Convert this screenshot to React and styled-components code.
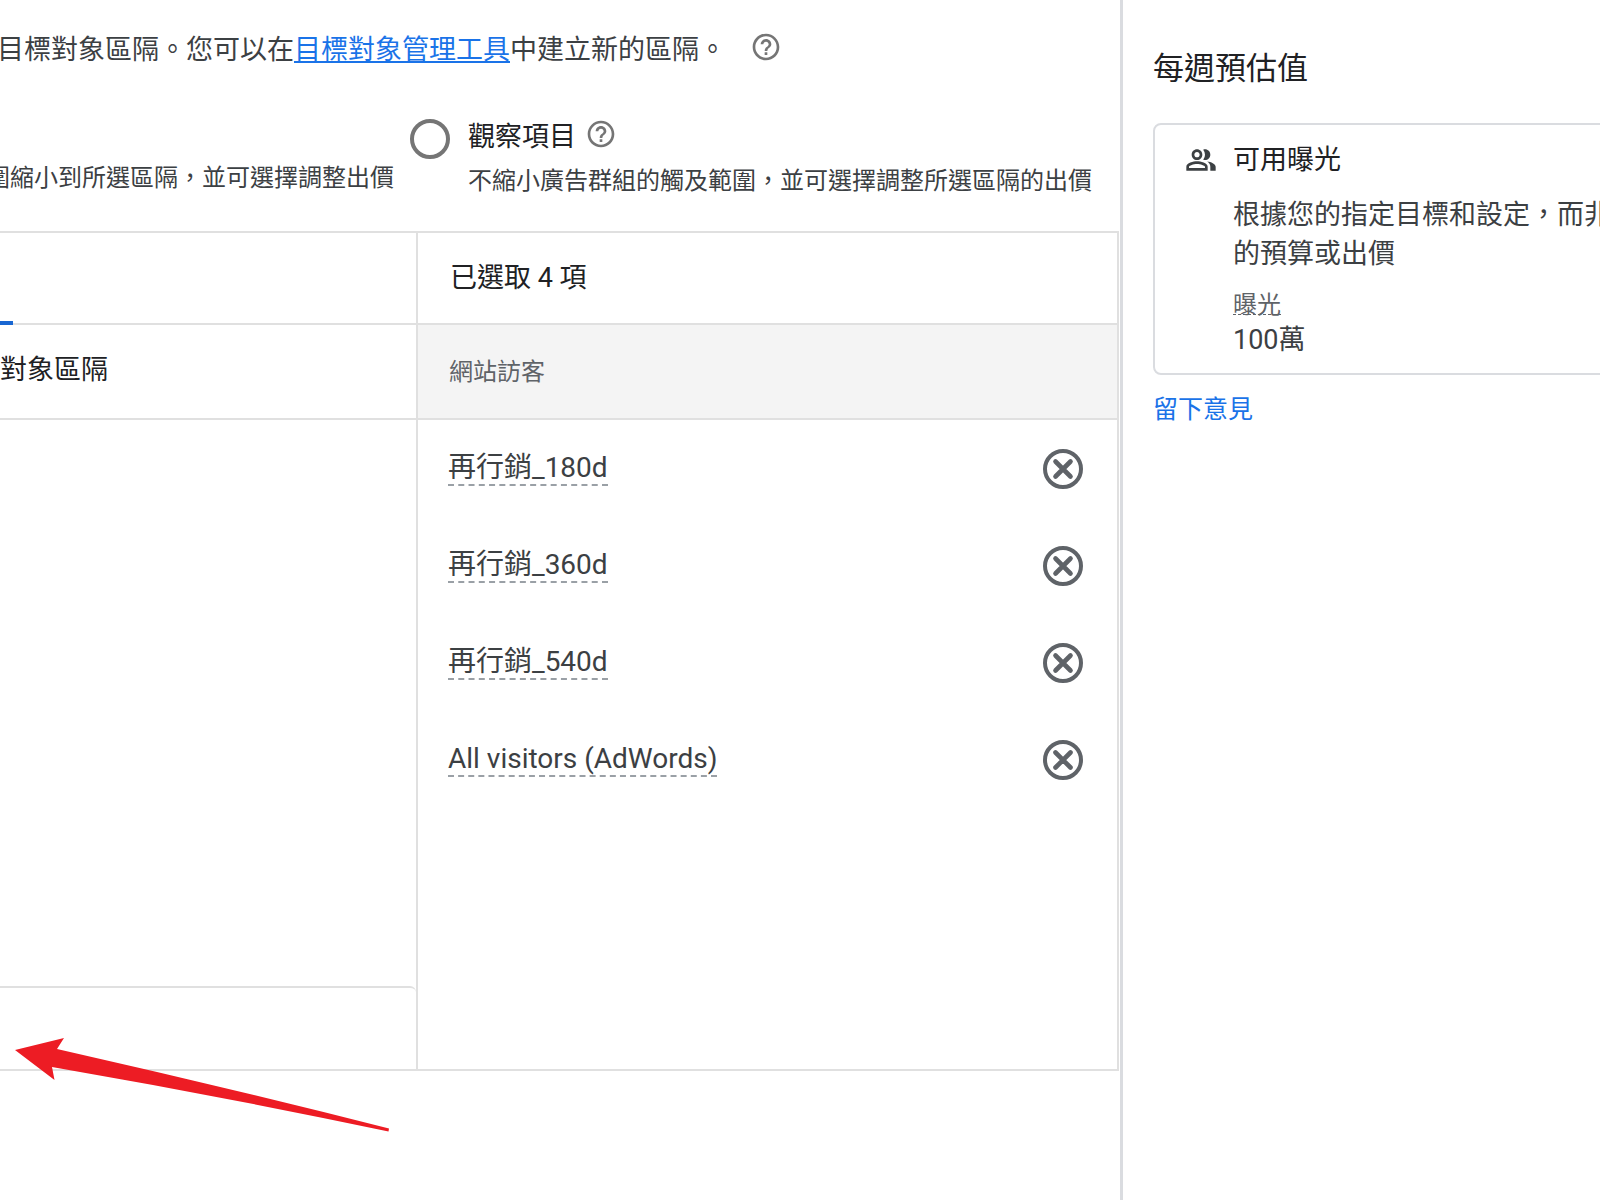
import React, { useState } from "react";
import styled, { createGlobalStyle } from "styled-components";
import { MdHelpOutline, MdOutlinePeopleAlt } from "react-icons/md";

const GlobalStyle = createGlobalStyle`
  * {
    box-sizing: border-box;
  }

  body {
    margin: 0;
    background: #fff;
    color: #3c4043;
    font-family: Roboto, "Noto Sans CJK TC", sans-serif;
    font-size: 27px;
    line-height: 38px;
    overflow: hidden;
  }
`;

const Page = styled.div`
  position: relative;
  display: grid;
  grid-template-columns: minmax(0, 1fr) 480px;
  min-height: 100vh;
  overflow: hidden;
`;

const Main = styled.main`
  min-width: 0;
`;

const Intro = styled.p`
  display: flex;
  align-items: flex-start;
  gap: 24px;
  height: 96px;
  margin: 0 0 0 -3px;
  padding-top: 31px;
  white-space: nowrap;
`;

const InlineLink = styled.a`
  color: #1a73e8;
  text-decoration: underline;
  text-decoration-thickness: 2px;
  text-underline-offset: 2px;
`;

const HelpButton = styled.button`
  display: flex;
  padding: 0;
  border: none;
  background: none;
  color: #757575;
  font-size: 32px;
`;

const Options = styled.div`
  display: grid;
  grid-template-columns: 394px minmax(0, 1fr);
  gap: 16px;
  height: 135px;
  padding-top: 20px;
`;

const ClippedHint = styled.div`
  display: flex;
  justify-content: flex-end;
  padding-top: 43px;
  overflow: hidden;
  font-size: 24px;
  white-space: nowrap;
`;

const Option = styled.div`
  display: grid;
  grid-template-columns: 40px minmax(0, 1fr);
  column-gap: 18px;
  align-content: start;
`;

const Radio = styled.input`
  appearance: none;
  width: 40px;
  height: 40px;
  margin: 3px 0 0;
  border: 4px solid #757575;
  border-radius: 50%;

  &:checked {
    border-color: #1a73e8;
    box-shadow: inset 0 0 0 6px #fff;
    background: #1a73e8;
  }
`;

const OptionTitle = styled.div`
  display: flex;
  align-items: flex-start;
  gap: 9px;
  height: 43px;
  padding-top: 2px;
  color: #202124;
`;

const OptionHint = styled.div`
  grid-column: 2;
  font-size: 24px;
  line-height: 44px;
  white-space: nowrap;
`;

const Picker = styled.section`
  display: grid;
  grid-template-columns: 418px minmax(0, 1fr);
  margin-right: 1px;
  border: 2px solid #e0e0e0;
  border-left: none;
`;

const Source = styled.div`
  display: flex;
  flex-direction: column;
  border-right: 2px solid #e0e0e0;
`;

const TabBar = styled.div`
  display: flex;
  align-items: flex-end;
  height: 92px;
  border-bottom: 2px solid #e0e0e0;
`;

const ActiveTab = styled.div`
  width: 13px;
  height: 4px;
  margin-bottom: -2px;
  background: #1967d2;
`;

const SourceTitle = styled.div`
  display: flex;
  align-items: center;
  height: 95px;
  padding-bottom: 3px;
  border-bottom: 2px solid #e0e0e0;
  color: #202124;
`;

const SourceFooter = styled.div`
  height: 83px;
  margin-top: auto;
  border-top: 2px solid #e0e0e0;
  border-top-right-radius: 6px;
`;

const SelectedHeader = styled.div`
  display: flex;
  align-items: center;
  height: 92px;
  padding: 0 32px;
  border-bottom: 2px solid #e0e0e0;
  color: #202124;
`;

const GroupHeader = styled.div`
  display: flex;
  align-items: center;
  height: 95px;
  padding: 0 31px;
  border-bottom: 2px solid #e0e0e0;
  background: #f4f4f4;
  color: #5f6368;
  font-size: 24px;
`;

const SegmentList = styled.ul`
  min-height: 649px;
  margin: 0;
  padding: 0;
  list-style: none;
`;

const SegmentRow = styled.li`
  display: flex;
  align-items: center;
  justify-content: space-between;
  height: 97px;
  padding: 0 34px 0 30px;
`;

const SegmentName = styled.span`
  border-bottom: 2px dashed #9aa0a6;
  font-size: 28px;
  line-height: 32px;
`;

const RemoveButton = styled.button`
  display: flex;
  padding: 0;
  border: none;
  background: none;
  color: #5f6368;
`;

const Estimates = styled.aside`
  padding: 50px 0 0 30px;
  border-left: 3px solid #dadce0;
`;

const EstimatesTitle = styled.h2`
  margin: 0 0 35px;
  color: #202124;
  font-size: 31px;
  font-weight: 400;
  line-height: 38px;
`;

const Card = styled.div`
  display: grid;
  grid-template-columns: 32px 400px;
  column-gap: 16px;
  width: 500px;
  height: 252px;
  padding: 16px 30px;
  border: 2px solid #dadce0;
  border-radius: 8px;
  align-content: start;
`;

const CardIcon = styled(MdOutlinePeopleAlt)`
  align-self: center;
  font-size: 32px;
`;

const CardTitle = styled.div`
  color: #202124;
`;

const CardBody = styled.div`
  grid-column: 2;
  padding-top: 17px;
`;

const CardText = styled.p`
  margin: 0 0 14px;
  line-height: 39px;
  white-space: nowrap;
`;

const MetricName = styled.div`
  color: #5f6368;
  font-size: 24px;
  line-height: 34px;

  span {
    text-decoration: underline dashed;
    text-decoration-thickness: 1px;
    text-underline-offset: 1px;
  }
`;

const MetricValue = styled.div`
  line-height: 36px;
`;

const FeedbackLink = styled.a`
  display: inline-block;
  margin-top: 16px;
  color: #1a73e8;
  font-size: 25px;
  text-decoration: none;
`;

const Arrow = styled.svg`
  position: absolute;
  left: 12px;
  top: 1034px;
  pointer-events: none;
`;

const CancelIcon = () => (
  <svg width="40" height="40" viewBox="0 0 40 40" fill="none" stroke="currentColor">
    <circle cx="20" cy="20" r="18" strokeWidth="4" />
    <path d="M12.500 12.500l15 15M27.500 12.500l-15 15" strokeWidth="4.6" strokeLinecap="round" />
  </svg>
);

const Help = () => (
  <HelpButton type="button" aria-label="說明">
    <MdHelpOutline />
  </HelpButton>
);

const App = () => {
  const [segments, setSegments] = useState([
    "再行銷_180d",
    "再行銷_360d",
    "再行銷_540d",
    "All visitors (AdWords)"
  ]);

  const removeSegment = name => {
    setSegments(segments.filter(val => val !== name));
  };

  return (
    <Page>
      <GlobalStyle />
      <Main>
        <Intro>
          <span>
            目標對象區隔。您可以在
            <InlineLink href="#audience">目標對象管理工具</InlineLink>
            中建立新的區隔。
          </span>
          <Help />
        </Intro>
        <Options>
          <ClippedHint>圍縮小到所選區隔，並可選擇調整出價</ClippedHint>
          <Option>
            <Radio type="radio" id="observation" name="targeting" />
            <OptionTitle>
              <label htmlFor="observation">觀察項目</label>
              <Help />
            </OptionTitle>
            <OptionHint>
              不縮小廣告群組的觸及範圍，並可選擇調整所選區隔的出價
            </OptionHint>
          </Option>
        </Options>
        <Picker>
          <Source>
            <TabBar>
              <ActiveTab />
            </TabBar>
            <SourceTitle>對象區隔</SourceTitle>
            <SourceFooter />
          </Source>
          <div>
            <SelectedHeader>已選取 {segments.length} 項</SelectedHeader>
            <GroupHeader>網站訪客</GroupHeader>
            <SegmentList>
              {segments.map(val => (
                <SegmentRow key={val}>
                  <SegmentName>{val}</SegmentName>
                  <RemoveButton
                    type="button"
                    aria-label={`移除 ${val}`}
                    onClick={() => removeSegment(val)}
                  >
                    <CancelIcon />
                  </RemoveButton>
                </SegmentRow>
              ))}
            </SegmentList>
          </div>
        </Picker>
      </Main>
      <Estimates>
        <EstimatesTitle>每週預估值</EstimatesTitle>
        <Card>
          <CardIcon />
          <CardTitle>可用曝光</CardTitle>
          <CardBody>
            <CardText>
              根據您的指定目標和設定，而非
              <br />
              的預算或出價
            </CardText>
            <MetricName>
              <span>曝光</span>
            </MetricName>
            <MetricValue>100萬</MetricValue>
          </CardBody>
        </Card>
        <FeedbackLink href="#feedback">留下意見</FeedbackLink>
      </Estimates>
      <Arrow width="380" height="100" viewBox="12 1034 380 100" fill="#ed1c24">
        <path d="M15 1050L64 1038L57 1049Q225 1087 389 1128.5L388.500 1131.500Q220 1096 52 1067L54.500 1080Z" />
      </Arrow>
    </Page>
  );
};

export default App;
